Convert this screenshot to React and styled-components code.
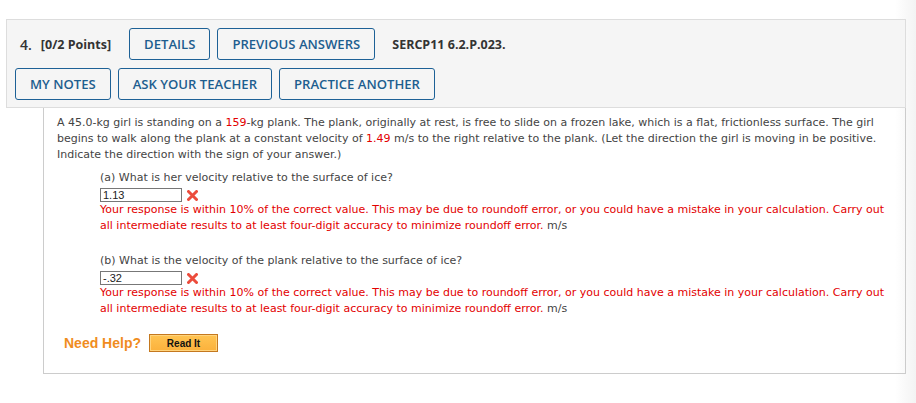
import React from 'react';
import styled, { createGlobalStyle } from 'styled-components';

const GlobalStyle = createGlobalStyle`
  html, body {
    margin: 0;
    padding: 0;
  }

  body {
    background: linear-gradient(to right, #ffffff 0, #ffffff 895px, #f3f3f3 916px);
    min-height: 403px;
  }
`;

const Page = styled.div`
  padding: 19px 10px 0 6px;
`;

const Header = styled.div`
  background: #f5f5f5;
  border: 1px solid #dddddd;
  padding: 8px 8px 7px 8px;
  display: flex;
  flex-direction: column;
  gap: 8px;
  font-family: "Open Sans", "Liberation Sans", sans-serif;
`;

const HeaderRow = styled.div`
  display: flex;
  align-items: center;
  gap: 7px;
  padding-left: ${p => p.$indent || 0}px;
`;

const QNumber = styled.span`
  font-size: 14px;
  font-weight: 600;
  color: #333;
  margin-right: 2px;
`;

const Points = styled.span`
  font-size: 12.5px;
  font-weight: 700;
  color: #333;
  margin-right: 11px;
`;

const ActionButton = styled.button`
  font-family: "Open Sans", "Liberation Sans", sans-serif;
  font-size: 13.1px;
  font-weight: 600;
  color: #1d5e8f;
  background: transparent;
  border: 1.5px solid #1d6196;
  border-radius: 3px;
  height: 32px;
  padding: 0 14px;
  text-transform: uppercase;
  cursor: pointer;
`;

const Code = styled.span`
  font-size: 12.5px;
  font-weight: 700;
  color: #333;
  margin-left: 10px;
`;

const Panel = styled.div`
  margin-left: 37px;
  border: 1px solid #cccccc;
  border-top: none;
  padding: 7px 14px 21px 13px;
  font-family: "DejaVu Sans", Verdana, sans-serif;
  font-size: 11px;
  line-height: 16px;
  color: #444;
`;

const Statement = styled.p`
  margin: 0 0 7px 0;
`;

const Hot = styled.span`
  color: #e30000;
`;

const Part = styled.div`
  margin-left: 43px;
  margin-top: ${p => p.$gap || 0}px;
`;

const Question = styled.div``;

const AnswerRow = styled.div`
  display: flex;
  align-items: center;
  gap: 5px;
  margin-top: 2px;
`;

const AnswerBox = styled.div`
  box-sizing: border-box;
  width: 82px;
  height: 14px;
  border: 1px solid #777;
  background: #fff;
  font-family: "Liberation Sans", Arial, sans-serif;
  font-size: 11px;
  line-height: 12px;
  color: #222;
  padding-left: 2px;
`;

const Feedback = styled.div`
  color: #e30000;
`;

const Unit = styled.span`
  color: #444;
`;

const HelpRow = styled.div`
  display: flex;
  align-items: center;
  gap: 8px;
  margin: 17px 0 0 7px;
`;

const HelpLabel = styled.span`
  font-family: "Liberation Sans", Arial, sans-serif;
  font-size: 14px;
  font-weight: 700;
  color: #f08c1e;
`;

const ReadIt = styled.button`
  box-sizing: border-box;
  width: 69px;
  height: 18px;
  padding: 0;
  border: 1px solid #c4781f;
  box-shadow: inset 0 0 0 1px #ffd47e;
  background: linear-gradient(#ffc452, #fbb13c);
  font-family: "Liberation Sans", Arial, sans-serif;
  font-size: 10px;
  font-weight: 700;
  color: #111;
`;

const WrongMark = () => (
  <svg width="11" height="11" viewBox="0 0 11 11">
    <path d="M1.5 1.5 L9.5 9.5 M9.5 1.5 L1.5 9.5" stroke="#ec4c3c" strokeWidth="3" strokeLinecap="round" />
  </svg>
);

const feedbackText = 'Your response is within 10% of the correct value. This may be due to roundoff error, or you could have a mistake in your calculation. Carry out all intermediate results to at least four-digit accuracy to minimize roundoff error.';

const parts = [
  { label: '(a)', question: 'What is her velocity relative to the surface of ice?', answer: '1.13' },
  { label: '(b)', question: 'What is the velocity of the plank relative to the surface of ice?', answer: '-.32' },
];

export default function App() {
  return (
    <>
      <GlobalStyle />
      <Page>
        <Header>
          <HeaderRow $indent={5}>
            <QNumber>4.</QNumber>
            <Points>[0/2 Points]</Points>
            <ActionButton>Details</ActionButton>
            <ActionButton>Previous Answers</ActionButton>
            <Code>SERCP11 6.2.P.023.</Code>
          </HeaderRow>
          <HeaderRow>
            <ActionButton>My Notes</ActionButton>
            <ActionButton>Ask Your Teacher</ActionButton>
            <ActionButton>Practice Another</ActionButton>
          </HeaderRow>
        </Header>
        <Panel>
          <Statement>
            A 45.0-kg girl is standing on a <Hot>159</Hot>-kg plank. The plank, originally at rest, is free to slide on a frozen lake, which is a flat, frictionless surface. The girl begins to walk along the plank at a constant velocity of <Hot>1.49</Hot> m/s to the right relative to the plank. (Let the direction the girl is moving in be positive. Indicate the direction with the sign of your answer.)
          </Statement>
          {parts.map((p, i) => (
            <Part key={p.label} $gap={i === 0 ? 0 : 19}>
              <Question>{p.label} {p.question}</Question>
              <AnswerRow>
                <AnswerBox>{p.answer}</AnswerBox>
                <WrongMark />
              </AnswerRow>
              <Feedback>{feedbackText} <Unit>m/s</Unit></Feedback>
            </Part>
          ))}
          <HelpRow>
            <HelpLabel>Need Help?</HelpLabel>
            <ReadIt>Read It</ReadIt>
          </HelpRow>
        </Panel>
      </Page>
    </>
  );
}
